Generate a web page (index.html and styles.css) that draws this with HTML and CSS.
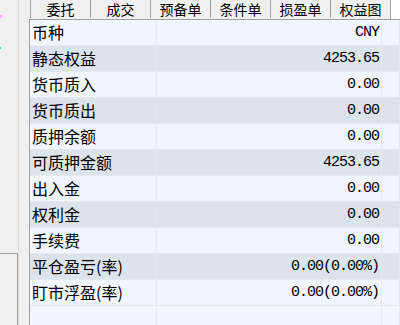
FILE: index.html
```html
<!DOCTYPE html>
<html lang="zh-CN">
<head>
    <meta charset="UTF-8">
    <title>资金</title>
    <link rel="stylesheet" href="styles.css">
</head>
<body>
    <div class="app">
        <aside class="side">
            <span class="mark mark-pink"></span>
            <span class="mark mark-cyan"></span>
            <div class="side-box"></div>
        </aside>

        <section class="panel">
            <nav class="tabs">
                <div class="tab">委托</div>
                <div class="tab">成交</div>
                <div class="tab">预备单</div>
                <div class="tab">条件单</div>
                <div class="tab">损盈单</div>
                <div class="tab">权益图</div>
                <div class="tab active">资金</div>
            </nav>

            <div class="grid">
                <div class="row"><div class="cell label">币种</div><div class="cell value">CNY</div><div class="cell"></div></div>
                <div class="row"><div class="cell label">静态权益</div><div class="cell value">4253.65</div><div class="cell"></div></div>
                <div class="row"><div class="cell label">货币质入</div><div class="cell value">0.00</div><div class="cell"></div></div>
                <div class="row"><div class="cell label">货币质出</div><div class="cell value">0.00</div><div class="cell"></div></div>
                <div class="row"><div class="cell label">质押余额</div><div class="cell value">0.00</div><div class="cell"></div></div>
                <div class="row"><div class="cell label">可质押金额</div><div class="cell value">4253.65</div><div class="cell"></div></div>
                <div class="row"><div class="cell label">出入金</div><div class="cell value">0.00</div><div class="cell"></div></div>
                <div class="row"><div class="cell label">权利金</div><div class="cell value">0.00</div><div class="cell"></div></div>
                <div class="row"><div class="cell label">手续费</div><div class="cell value">0.00</div><div class="cell"></div></div>
                <div class="row"><div class="cell label">平仓盈亏(率)</div><div class="cell value">0.00(0.00%)</div><div class="cell"></div></div>
                <div class="row"><div class="cell label">盯市浮盈(率)</div><div class="cell value">0.00(0.00%)</div><div class="cell"></div></div>
                <div class="row filler"><div class="cell"></div><div class="cell"></div><div class="cell"></div></div>
            </div>
        </section>
    </div>
</body>
</html>
```

FILE: styles.css
```css
* {
    box-sizing: border-box;
}

body {
    margin: 0;
    background-color: #f0f0f0;
    font-family: "Noto Sans CJK SC", sans-serif;
    color: #000;
    overflow: hidden;
}

.app {
    display: flex;
    width: 400px;
    height: 325px;
    overflow: hidden;
}

/* Left strip */
.side {
    width: 19px;
    flex-shrink: 0;
    border-right: 1px solid #dcdcdc;
    display: flex;
    flex-direction: column;
}

.mark {
    display: block;
}

.mark-pink {
    width: 2px;
    height: 3px;
    margin-top: 15px;
    background-color: #f4b0f0;
}

.mark-cyan {
    width: 1px;
    height: 2px;
    margin-top: 29px;
    background-color: #50c8e8;
}

.side-box {
    margin-top: auto;
    width: 18px;
    height: 72px;
    border-top: 1px solid #a0a0a0;
    border-right: 1px solid #a0a0a0;
}

/* Main panel */
.panel {
    flex: 1;
    min-width: 0;
    margin-left: 10px;
    display: flex;
    flex-direction: column;
}

.tabs {
    display: flex;
    height: 19px;
    padding-left: 1px;
    white-space: nowrap;
    overflow: hidden;
}

.tab {
    flex: 0 0 60px;
    height: 18px;
    border-left: 1px solid #a0a0a0;
    text-align: center;
    font-size: 14px;
    line-height: 18px;
}

.tab.active {
    height: 19px;
    background-color: #ffffff;
}

.grid {
    flex: 1;
    border-top: 1px solid #a0a0a0;
    border-left: 1px solid #a0a0a0;
    background-color: #f0f6fc;
    overflow: hidden;
}

.row {
    display: grid;
    grid-template-columns: 127px 225px 1fr;
    height: 26px;
}

.row:nth-child(even):not(.filler) {
    background-color: #dce3eb;
}

.cell {
    border-right: 1px solid #e4e9ef;
    border-bottom: 1px solid #e4e9ef;
    line-height: 25px;
    white-space: nowrap;
}

.label {
    padding-left: 2px;
    font-size: 16px;
}

.value {
    padding-right: 2px;
    text-align: right;
    font-family: "Liberation Mono", monospace;
    font-size: 15px;
    letter-spacing: -1px;
}

.filler {
    height: 40px;
}
```
